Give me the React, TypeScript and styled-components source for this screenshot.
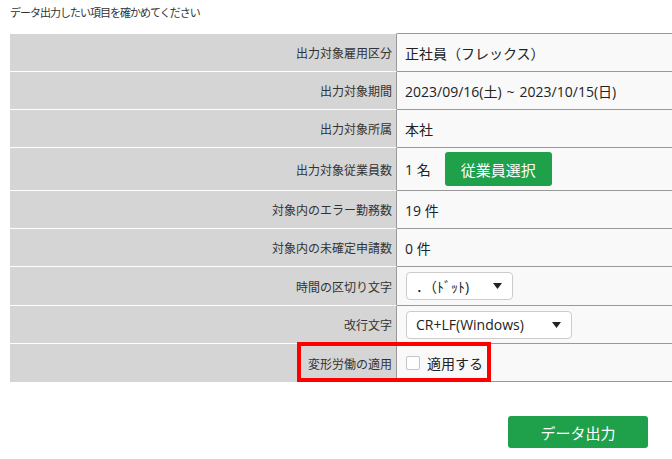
import React from "react";
import styled, { createGlobalStyle } from "styled-components";

const GlobalStyle = createGlobalStyle`
  body {
    margin: 0;
    background: #fff;
    font-family: "Open Sans", "Noto Sans CJK JP", sans-serif;
    color: #222;
  }
`;

const Page = styled.div`
  padding: 5px 0 0 10px;
  overflow: hidden;
`;

const Title = styled.div`
  font-size: 11px;
  letter-spacing: -1px;
  line-height: 16px;
  height: 28px;
  color: #333;
`;

const TableBox = styled.div`
  position: relative;
  width: 680px;
`;

const Table = styled.table`
  width: 100%;
  border-collapse: separate;
  border-spacing: 0;
  font-size: 14px;
`;

const Tr = styled.tr<{ h: number }>`
  height: ${(p) => p.h}px;
  &:last-child td {
    border-bottom: 1px solid #999;
  }
`;

const Th = styled.th`
  width: 382px;
  padding: 0 4px 0 0;
  background: #d4d5d4;
  border-top: 1px solid #fff;
  border-right: 1px solid #999;
  text-align: right;
  font-family: "Noto Sans CJK JP", sans-serif;
  font-weight: normal;
  font-size: 12px;
  color: #333;
  vertical-align: middle;
  white-space: nowrap;
`;

const Td = styled.td`
  padding: 0 0 0 8px;
  background: #f9f9f9;
  border-top: 1px solid #999;
  vertical-align: middle;
  white-space: nowrap;
`;

const Tilde = styled.span`
  margin: 0 5px;
`;

const Inline = styled.div`
  display: flex;
  align-items: center;
  gap: 14px;
`;

const GreenButton = styled.button<{ w: number; h: number }>`
  width: ${(p) => p.w}px;
  height: ${(p) => p.h}px;
  background: #1fa04b;
  color: #fff;
  border: none;
  border-radius: 3px;
  font-family: "Noto Sans CJK JP", sans-serif;
  font-size: 15px;
  padding: 0;
  cursor: pointer;
`;

const Select = styled.div<{ w: number }>`
  width: ${(p) => p.w}px;
  height: 28px;
  box-sizing: border-box;
  border: 1px solid #ccc;
  border-radius: 4px;
  background: #fff;
  display: flex;
  align-items: center;
  justify-content: space-between;
  padding: 0 10px 0 9px;
  margin-left: 1px;
`;

const CheckLabel = styled.label`
  display: flex;
  align-items: center;
  gap: 7px;
  margin-left: 1px;
`;

const Check = styled.input`
  appearance: none;
  margin: 0;
  width: 14px;
  height: 14px;
  border: 1px solid #c4c4c4;
  border-radius: 2px;
  background: #fff;
`;

const Highlight = styled.div`
  position: absolute;
  left: 287px;
  top: 309px;
  width: 194px;
  height: 40px;
  box-sizing: border-box;
  border: 4px solid #f00;
  pointer-events: none;
`;

const Footer = styled.div`
  display: flex;
  justify-content: flex-end;
  padding: 34px 24px 0 0;
`;

const Caret = () => (
  <svg width="9" height="6" viewBox="0 0 9 6">
    <path d="M0 0h9L4.5 6z" fill="#222" />
  </svg>
);

export default function App() {
  return (
    <>
      <GlobalStyle />
      <Page>
        <Title>データ出力したい項目を確かめてください</Title>
        <TableBox>
          <Table>
            <tbody>
              <Tr h={38}>
                <Th>出力対象雇用区分</Th>
                <Td>正社員（フレックス）</Td>
              </Tr>
              <Tr h={38}>
                <Th>出力対象期間</Th>
                <Td>
                  2023/09/16(土)<Tilde>~</Tilde>2023/10/15(日)
                </Td>
              </Tr>
              <Tr h={38}>
                <Th>出力対象所属</Th>
                <Td>本社</Td>
              </Tr>
              <Tr h={43}>
                <Th>出力対象従業員数</Th>
                <Td>
                  <Inline>
                    <span>1 名</span>
                    <GreenButton w={107} h={34}>
                      従業員選択
                    </GreenButton>
                  </Inline>
                </Td>
              </Tr>
              <Tr h={38}>
                <Th>対象内のエラー勤務数</Th>
                <Td>19 件</Td>
              </Tr>
              <Tr h={38}>
                <Th>対象内の未確定申請数</Th>
                <Td>0 件</Td>
              </Tr>
              <Tr h={39}>
                <Th>時間の区切り文字</Th>
                <Td>
                  <Select w={107}>
                    <span>．（ﾄﾞｯﾄ)</span>
                    <Caret />
                  </Select>
                </Td>
              </Tr>
              <Tr h={38}>
                <Th>改行文字</Th>
                <Td>
                  <Select w={166}>
                    <span>CR+LF(Windows)</span>
                    <Caret />
                  </Select>
                </Td>
              </Tr>
              <Tr h={39}>
                <Th>変形労働の適用</Th>
                <Td>
                  <CheckLabel>
                    <Check type="checkbox" />
                    <span>適用する</span>
                  </CheckLabel>
                </Td>
              </Tr>
            </tbody>
          </Table>
          <Highlight />
        </TableBox>
        <Footer>
          <GreenButton w={140} h={32}>
            データ出力
          </GreenButton>
        </Footer>
      </Page>
    </>
  );
}
